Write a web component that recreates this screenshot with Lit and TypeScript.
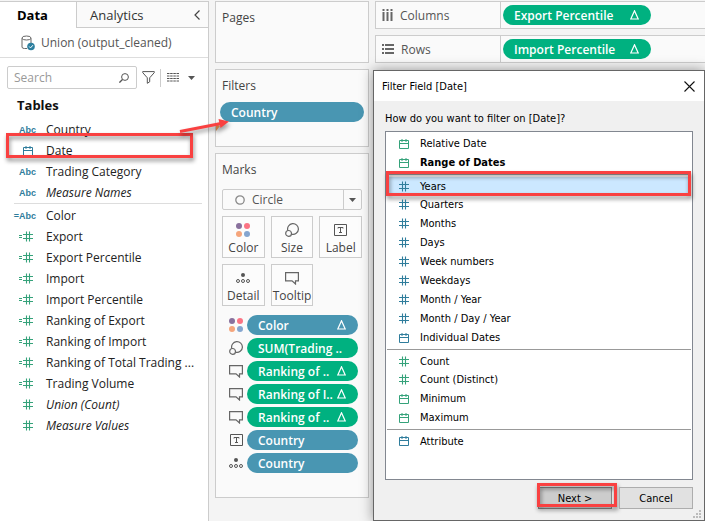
import { LitElement, html, css, svg, nothing } from "lit";
import { customElement, property } from "lit/decorators.js";
import { classMap } from "lit/directives/class-map.js";

const icons: Record<string, { w: number; h: number; body: unknown }> = {
  hash: { w: 10, h: 11, body: svg`<path d="M3.5 0.5v10M6.5 0.5v10M0 3.5h10M0 7.5h10" stroke="currentColor" fill="none" stroke-width="1.1"/>` },
  calcHash: { w: 14, h: 11, body: svg`<path d="M7.5 0.5v10M10.5 0.5v10M4 3.5h10M4 7.5h10M0 4.5h3M0 6.5h3" stroke="currentColor" fill="none" stroke-width="1.1"/>` },
  calendar: { w: 10, h: 10, body: svg`<path d="M0.5 1.5h9v8h-9zM0.5 4.5h9M3 0v3M7 0v3" stroke="currentColor" fill="none"/>` },
  source: { w: 14, h: 16, body: svg`<path d="M6 13.5H3.5Q1 13.5 1 12V3Q1 1 5.5 1T10 3V8M1 3.5Q2 5 5.5 5T10 3.5" stroke="#666" fill="none"/><circle cx="10" cy="11.5" r="3.8" fill="#2d7f9f"/><path d="M8.2 11.5l1.3 1.4 2.4-2.7" stroke="#fff" fill="none"/>` },
  chevron: { w: 6, h: 10, body: svg`<path d="M5.5 0.5L1 5l4.5 4.5" stroke="#444" fill="none" stroke-width="1.2"/>` },
  search: { w: 10, h: 10, body: svg`<circle cx="6" cy="4" r="3.4" stroke="#555" fill="none"/><path d="M3.5 6.5L0.4 9.6" stroke="#555" stroke-width="1.3"/>` },
  funnel: { w: 13, h: 13, body: svg`<path d="M0.7 0.6h11.6v1L7.7 6.8v4L5.3 12.3V6.8L0.7 1.6z" stroke="#555" fill="none"/>` },
  grid: { w: 12, h: 9, body: svg`<path d="M0 0.5h12M0 3h12M0 5.5h12M0 8h12" stroke="#555" stroke-dasharray="2.5 0.667" fill="none"/>` },
  caret: { w: 7, h: 4, body: svg`<path d="M0 0h7L3.5 4z" fill="#555"/>` },
  circle: { w: 10, h: 10, body: svg`<circle cx="5" cy="5" r="4.2" stroke="#8a8a8a" stroke-width="1.3" fill="none"/>` },
  color: { w: 14, h: 14, body: svg`<circle cx="3" cy="3" r="3" fill="#89719d"/><circle cx="11" cy="3" r="3" fill="#fb7484"/><circle cx="3" cy="11" r="3" fill="#f5a57c"/><circle cx="11" cy="11" r="3" fill="#84a5cf"/>` },
  size: { w: 14, h: 14, body: svg`<path d="M2.8 7.5a5.4 5.4 0 1 1 4 3.8" stroke="#666" stroke-width="1.2" fill="none"/><circle cx="3.6" cy="10.4" r="2.9" stroke="#666" stroke-width="1.2" fill="none"/>` },
  label: { w: 13, h: 12, body: svg`<path d="M0.5 0.5h12v11h-12zM4 4.5V3.5h5v1M6.5 3.5v5M5 8.5h3" stroke="#555" fill="none"/>` },
  detail: { w: 14, h: 10, body: svg`<circle cx="7" cy="2" r="2" fill="#555"/><circle cx="2" cy="8" r="1.5" stroke="#555" fill="none"/><circle cx="7" cy="8" r="1.5" stroke="#555" fill="none"/><circle cx="12" cy="8" r="1.5" stroke="#555" fill="none"/>` },
  tooltip: { w: 14, h: 13, body: svg`<path d="M0.6 0.6h12.8v8.2h-2.9V12L7 8.8H0.6z" stroke="#666" stroke-width="1.2" fill="none"/>` },
  columns: { w: 11, h: 12, body: svg`<path d="M1.5 0v2M1.5 3v9M5.5 0v2M5.5 3v9M9.5 0v2M9.5 3v9" stroke="#666" stroke-width="2"/>` },
  rows: { w: 12, h: 10, body: svg`<path d="M0 1h2M3 1h9M0 5h2M3 5h9M0 9h2M3 9h9" stroke="#666" stroke-width="2"/>` },
  delta: { w: 9, h: 10, body: svg`<path d="M4.5 0.8L8.2 9H0.8z" stroke="#fff" stroke-width="1.2" fill="none"/>` },
  close: { w: 11, h: 11, body: svg`<path d="M0.5 0.5l10 10M10.5 0.5l-10 10" stroke="#111" stroke-width="1.1"/>` },
  grip: { w: 8, h: 8, body: svg`<path d="M6 0h2v2H6zM3 3h2v2H3zM6 3h2v2H6zM0 6h2v2H0zM3 6h2v2H3zM6 6h2v2H6z" fill="#bbb"/>` },
};

const icon = (name: string) => {
  const i = icons[name];
  return html`<svg width=${i.w} height=${i.h} viewBox="0 0 ${i.w} ${i.h}" aria-hidden="true">${i.body}</svg>`;
};

const reset = css`
  * { box-sizing: border-box; }
  svg { display: block; flex: none; }
  button, input, select { font: inherit; color: inherit; margin: 0; }
  ul, h1, h2, p { margin: 0; padding: 0; list-style: none; font-weight: normal; font-size: inherit; }
`;

@customElement("field-pill")
class FieldPill extends LitElement {
  @property() label = "";
  @property({ type: Boolean }) measure = false;
  @property({ type: Boolean }) calc = false;
  static styles = [reset, css`
    :host { display: block; min-width: 0; }
    .pill {
      display: flex; align-items: center; justify-content: space-between;
      width: 100%; height: 20px; padding: 0 12px 0 11px;
      border: 0; border-radius: 10px; background: #4996b2; color: #fff;
      font-weight: 600; white-space: nowrap; text-align: left;
    }
    .measure { background: #00b180; }
  `];
  render() {
    return html`<button class=${classMap({ pill: true, measure: this.measure })}>
      <span>${this.label}</span>${this.calc ? icon("delta") : nothing}
    </button>`;
  }
}

type Field = { name: string; kind: string; italic?: boolean; marked?: boolean };
const dimensions: Field[] = [
  { name: "Country", kind: "Abc" },
  { name: "Date", kind: "calendar", marked: true },
  { name: "Trading Category", kind: "Abc" },
  { name: "Measure Names", kind: "Abc", italic: true },
];
const measures: Field[] = [
  { name: "Color", kind: "=Abc" },
  ...["Export", "Export Percentile", "Import", "Import Percentile", "Ranking of Export",
    "Ranking of Import", "Ranking of Total Trading ...", "Trading Volume",
  ].map((name) => ({ name, kind: "calcHash" })),
  { name: "Union (Count)", kind: "hash", italic: true },
  { name: "Measure Values", kind: "hash", italic: true },
];

@customElement("data-pane")
class DataPane extends LitElement {
  static styles = [reset, css`
    :host { display: block; background: #fff; border: 1px solid #ccc; border-left: 0; border-bottom: 0; margin-top: 1px; color: #333; }
    .tabs { display: flex; height: 26px; }
    .tab { border: 0; background: none; padding: 0; font-size: 13px; }
    .active { width: 76px; padding-left: 17px; text-align: left; font-weight: 700; color: #000; }
    .rest { flex: 1; display: flex; justify-content: space-between; align-items: center; padding: 0 8px 0 13px; background: #fafafa; border-left: 1px solid #ccc; border-bottom: 1px solid #ccc; }
    .icon-button { border: 0; background: none; padding: 0; }
    .source { display: flex; align-items: center; gap: 6px; height: 30px; padding-left: 21px; border-bottom: 1px solid #ddd; color: #555; }
    .tools { display: flex; align-items: center; gap: 5px; padding: 8px 13px 0 7px; }
    .search { display: flex; align-items: center; flex: 1; min-width: 0; height: 23px; padding: 0 7px 0 6px; border: 1px solid #ccc; border-radius: 2px; }
    .search input { flex: 1; min-width: 0; border: 0; padding: 0; outline: 0; background: none; }
    .search input::placeholder { color: #999; opacity: 1; }
    .view { display: flex; align-items: center; gap: 9px; height: 18px; padding-left: 6px; border: 0; border-left: 1px solid #ccc; background: none; padding-right: 0; }
    .heading { padding: 6px 0 4px 17px; font-size: 13px; line-height: 20px; font-weight: 700; color: #111; }
    .fields { padding: 0; }
    .fields + .fields { margin: 0 6px 0 14px; border-top: 1px solid #ddd; padding-top: 1px; }
    .fields + .fields .kind { width: 22px; }
    .field { position: relative; display: flex; align-items: center; height: 21px; color: #222; white-space: nowrap; }
    .kind { display: flex; flex: none; justify-content: flex-end; width: 36px; padding-right: 3px; color: #2f7d9c; margin-right: 10px; }
    .text { padding: 0; font-family: "Liberation Sans", sans-serif; font-size: 9px; font-weight: 700; }
    .green { color: #35a27a; }
    .italic { font-style: italic; }
    .marked::after { content: ""; position: absolute; inset: -7px 15px 3px 6px; border: 3px solid #f94141; filter: drop-shadow(1px 3px 2px rgba(0,0,0,.45)); }
  `];
  field(f: Field) {
    const text = f.kind.endsWith("Abc");
    return html`<li class=${classMap({ field: true, marked: !!f.marked })}>
      <span class=${classMap({ kind: true, text, green: f.kind.endsWith("ash") })}>${text ? f.kind : icon(f.kind)}</span>
      <span class=${classMap({ italic: !!f.italic })}>${f.name}</span>
    </li>`;
  }
  render() {
    return html`
      <div class="tabs">
        <button class="tab active">Data</button>
        <div class="rest"><button class="tab">Analytics</button><button class="icon-button" aria-label="Collapse">${icon("chevron")}</button></div>
      </div>
      <div class="source">${icon("source")}<span>Union (output_cleaned)</span></div>
      <div class="tools">
        <label class="search"><input type="text" placeholder="Search" aria-label="Search">${icon("search")}</label>
        <button class="icon-button" aria-label="Filter">${icon("funnel")}</button>
        <button class="view" aria-label="View">${icon("grid")}${icon("caret")}</button>
      </div>
      <h2 class="heading">Tables</h2>
      <ul class="fields">${dimensions.map((f) => this.field(f))}</ul>
      <ul class="fields">${measures.map((f) => this.field(f))}</ul>`;
  }
}

@customElement("shelf-cards")
class ShelfCards extends LitElement {
  static styles = [reset, css`
    :host { display: flex; flex-direction: column; gap: 6px; padding: 1px 0 0 6px; color: #444; }
    .card { border: 1px solid #ccc; background: #fafafa; padding: 7px 6px 0; }
    .title { line-height: 18px; }
    .pages { height: 62px; }
    .filters { height: 78px; padding: 7px 4px 0; }
    .filters .title { padding: 0 2px; margin-bottom: 7px; }
    .marks { padding-bottom: 21px; }
    .mark-type { position: relative; display: flex; align-items: center; height: 21px; margin: 10px 0 6px; border: 1px solid #ccc; border-radius: 2px; padding-left: 12px; }
    .mark-type select { appearance: none; flex: 1; align-self: stretch; border: 0; background: none; padding: 0 0 0 7px; outline: 0; color: #555; }
    .arrow { display: flex; align-items: center; justify-content: center; width: 18px; align-self: stretch; border-left: 1px solid #ccc; pointer-events: none; }
    .buttons { display: grid; grid-template-columns: repeat(3, 1fr); gap: 6px; margin-bottom: 9px; }
    .mark { display: flex; flex-direction: column; align-items: center; justify-content: space-between; height: 42px; padding: 6px 0 0; border: 1px solid #ccc; background: #fcfcfc; line-height: 18px; }
    .glyph { display: flex; align-items: center; height: 14px; }
    .row { display: grid; grid-template-columns: 14px 1fr; gap: 4px; align-items: center; justify-items: center; padding: 0 4px 3px 7px; }
    .row field-pill { justify-self: stretch; }
  `];
  render() {
    const marks = [["Color", "color"], ["Size", "size"], ["Label", "label"], ["Detail", "detail"], ["Tooltip", "tooltip"]];
    const rows: [string, string, boolean, boolean][] = [
      ["color", "Color", false, true],
      ["size", "SUM(Trading ..", true, false],
      ["tooltip", "Ranking of ..", true, true],
      ["tooltip", "Ranking of I..", true, true],
      ["tooltip", "Ranking of ..", true, true],
      ["label", "Country", false, false],
      ["detail", "Country", false, false],
    ];
    return html`
      <section class="card pages"><h2 class="title">Pages</h2></section>
      <section class="card filters"><h2 class="title">Filters</h2><field-pill label="Country"></field-pill></section>
      <section class="card marks">
        <h2 class="title">Marks</h2>
        <div class="mark-type">${icon("circle")}<select aria-label="Mark type"><option>Circle</option></select><span class="arrow">${icon("caret")}</span></div>
        <div class="buttons">${marks.map(([t, i]) => html`<button class="mark"><span class="glyph">${icon(i)}</span><span>${t}</span></button>`)}</div>
        ${rows.map(([i, t, m, c]) => html`<div class="row">${icon(i)}<field-pill label=${t} ?measure=${m} ?calc=${c}></field-pill></div>`)}
      </section>`;
  }
}

@customElement("filter-dialog")
class FilterDialog extends LitElement {
  static styles = [reset, css`
    :host { display: block; border: 1px solid #666; background: #f0f0f0; color: #000; font-family: "DejaVu Sans Condensed", "DejaVu Sans", sans-serif; font-size: 11px; box-shadow: 0 0 12px rgba(0,0,0,.4); }
    .title { display: flex; align-items: center; justify-content: space-between; height: 30px; padding: 0 9px 0 8px; background: #fff; }
    .close { border: 0; background: none; padding: 0; }
    .body { padding: 10px 11px 0; }
    .question { line-height: 16px; margin-bottom: 4px; }
    .list { height: 349px; padding: 2px 1px; border: 1px solid #828790; background: #fff; }
    .option { position: relative; display: flex; align-items: center; gap: 11px; height: 19px; padding-left: 12px; color: #000; }
    .line + .option { height: 18px; }
    .blue { color: #2f7d9c; }
    .green { color: #35a27a; }
    .bold { font-weight: 700; }
    .line { height: 1px; margin: 2px 0; background: #999; }
    .selected { background: #cce8ff; }
    .marked::after { content: ""; position: absolute; border: 3px solid #f94141; filter: drop-shadow(1px 3px 2px rgba(0,0,0,.45)); pointer-events: none; }
    .selected::after { inset: -6px 0 -1px -1px; }
    .actions { display: flex; justify-content: flex-end; gap: 7px; padding-top: 7px; }
    .action { position: relative; width: 74px; height: 22px; border: 1px solid #adadad; background: #e1e1e1; padding: 0; }
    .action.marked { border-color: #888; background: #ccc; }
    .action.marked::after { inset: -5px -6px 1px -2px; }
    .foot { display: flex; justify-content: flex-end; padding: 1px 3px 2px; }
  `];
  option(name: string, glyph: string, color: string, bold = false, selected = false) {
    return html`<li role="option" aria-selected=${selected} class=${classMap({ option: true, bold, selected, marked: selected })}><span class=${color}>${icon(glyph)}</span><span>${name}</span></li>`;
  }
  render() {
    const o = this.option;
    return html`
      <header class="title"><h1>Filter Field [Date]</h1><button class="close" aria-label="Close">${icon("close")}</button></header>
      <div class="body">
        <p class="question" id="question">How do you want to filter on [Date]?</p>
        <ul class="list" role="listbox" aria-labelledby="question">
          ${o("Relative Date", "calendar", "green")}
          ${o("Range of Dates", "calendar", "green", true)}
          <li class="line" role="presentation"></li>
          ${o("Years", "hash", "blue", false, true)}
          ${["Quarters", "Months", "Days", "Week numbers", "Weekdays", "Month / Year", "Month / Day / Year"].map((n) => o(n, "hash", "blue"))}
          ${o("Individual Dates", "calendar", "blue")}
          <li class="line" role="presentation"></li>
          ${o("Count", "hash", "green")}
          ${o("Count (Distinct)", "hash", "green")}
          ${o("Minimum", "calendar", "green")}
          ${o("Maximum", "calendar", "green")}
          <li class="line" role="presentation"></li>
          ${o("Attribute", "calendar", "blue")}
        </ul>
        <div class="actions"><button class="action marked">Next &gt;</button><button class="action">Cancel</button></div>
      </div>
      <div class="foot">${icon("grip")}</div>`;
  }
}

@customElement("app-root")
class AppRoot extends LitElement {
  static styles = [reset, css`
    :host { display: block; font-family: "Open Sans", "Noto Sans", sans-serif; font-size: 12px; color: #555; }
    .app { position: relative; display: grid; grid-template-columns: 209px 160px 1fr; min-height: 100vh; overflow: hidden; background: #f4f4f4; }
    .shelves { display: flex; flex-direction: column; gap: 6px; padding: 1px 0 0 6px; }
    .shelf { display: grid; grid-template-columns: 125px 148px; gap: 2px; align-items: center; height: 28px; border: 1px solid #ccc; border-right: 0; background: #fafafa; }
    .name { display: flex; align-items: center; gap: 7px; height: 100%; padding-left: 6px; border-right: 1px solid #ccc; }
    .dialog { position: absolute; left: 373px; right: 0; top: 70px; }
    .arrow { position: absolute; left: 176px; top: 112px; filter: drop-shadow(1px 3px 2px rgba(0,0,0,.4)); pointer-events: none; }
  `];
  render() {
    return html`<main class="app">
      <data-pane></data-pane>
      <shelf-cards></shelf-cards>
      <div class="shelves">
        <div class="shelf"><span class="name">${icon("columns")}Columns</span><field-pill label="Export Percentile" measure calc></field-pill></div>
        <div class="shelf"><span class="name">${icon("rows")}Rows</span><field-pill label="Import Percentile" measure calc></field-pill></div>
      </div>
      <svg class="arrow" width="56" height="26" viewBox="0 0 56 26" aria-hidden="true"><path d="M40 12v7l4-5z" fill="#c4793f"/><path d="M4 19.5L45 11.5" stroke="#f94141" stroke-width="3"/><path d="M53 9.5L42.5 7l2 9z" fill="#f94141"/></svg>
      <filter-dialog class="dialog"></filter-dialog>
    </main>`;
  }
}
